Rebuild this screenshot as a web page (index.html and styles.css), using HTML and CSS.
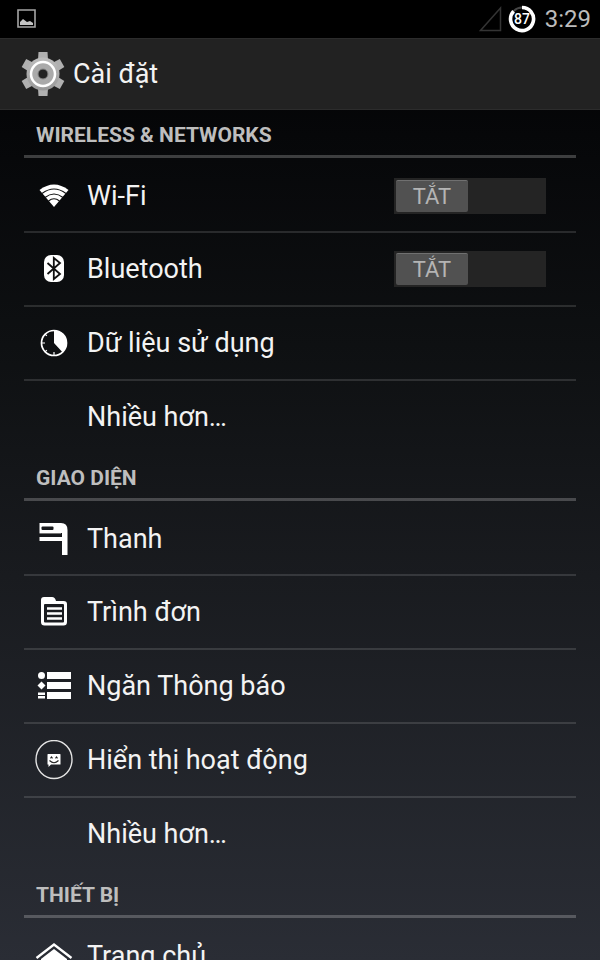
FILE: index.html
```html
<!DOCTYPE html>
<html lang="vi">
<head>
<meta charset="utf-8">
<meta name="viewport" content="width=device-width, initial-scale=1">
<title>Cài đặt</title>
<link rel="stylesheet" href="styles.css">
</head>
<body>
<div class="screen">
  <div class="status">
    <svg class="status-picture" width="20" height="20" viewBox="0 0 20 20"><path d="M1 1h17v17H1z" fill="none" stroke="#a5a5a5" stroke-width="1.600"/><path d="M3 16v-3l3-3 4 3 3-1 3 2v2z" fill="#c4c4c4"/></svg>
    <div class="status-right">
      <svg width="24" height="26" viewBox="0 0 24 26"><path d="M1.500 24.500H21.500V2z" fill="none" stroke="#343434" stroke-width="1.500"/></svg>
      <svg width="28" height="28" viewBox="0 0 28 28"><circle cx="14" cy="14" r="11.500" fill="none" stroke="#444" stroke-width="2"/><path d="M14 2.500A11.500 11.500 0 1 1 5.600 6.200" fill="none" stroke="#fff" stroke-width="3.600"/><text class="level" x="14" y="19" text-anchor="middle">87</text></svg>
      <time class="clock">3:29</time>
    </div>
  </div>
  <header class="bar">
    <svg width="44" height="46" viewBox="-22 -23 44 46">
      <defs><linearGradient id="metal" x1="0" y1="0" x2="0" y2="1"><stop offset="0" stop-color="#bdbdbd"/><stop offset="1" stop-color="#999"/></linearGradient></defs>
      <g fill="#b0b0b0">
        <path id="tooth" d="M-5-14L-4.500-22H4.500L5-14z"/>
        <use href="#tooth" transform="rotate(60)"/><use href="#tooth" transform="rotate(120)"/><use href="#tooth" transform="rotate(180)"/><use href="#tooth" transform="rotate(240)"/><use href="#tooth" transform="rotate(300)"/>
      </g>
      <circle r="16.500" fill="url(#metal)"/><circle r="12" fill="#aaa" stroke="#fff" stroke-width="2.500"/><circle r="5" fill="#222" stroke="#858585" stroke-width="1"/>
    </svg>
    <h1 class="title">Cài đặt</h1>
  </header>
  <main class="list">
    <section>
      <h2 class="heading">WIRELESS &amp; NETWORKS</h2>
      <ul class="rows">
        <li class="row">
          <svg class="icon" viewBox="0 0 40 40"><path d="M5.500 14Q20 3 34.500 14L20 31z" fill="#fff"/><g fill="none" stroke="#111" stroke-width="1.100"><path d="M8 17.500Q20 8.500 32 17.500M11 21.500Q20 14.500 29 21.500M14.500 25Q20 20.500 25.500 25"/></g></svg>
          <span class="label" id="wifi">Wi-Fi</span>
          <button class="switch" type="button" role="switch" aria-checked="false" aria-labelledby="wifi"><span class="thumb">TẮT</span></button>
        </li>
        <li class="row">
          <svg class="icon" viewBox="0 0 40 40"><rect x="10" y="6" width="20" height="27" rx="7" fill="#fff"/><path d="M13.500 14L26 25L19.800 30V9L26 14L13.500 25" fill="none" stroke="#111" stroke-width="1.800"/></svg>
          <span class="label" id="bluetooth">Bluetooth</span>
          <button class="switch" type="button" role="switch" aria-checked="false" aria-labelledby="bluetooth"><span class="thumb">TẮT</span></button>
        </li>
        <li class="row">
          <svg class="icon" viewBox="0 0 40 40"><circle cx="20" cy="20" r="12.500" fill="none" stroke="#fff" stroke-width="1.700"/><path d="M20 20V7.500A12.500 12.500 0 0 1 28.500 29.200z" fill="#fff"/><path d="M7 20h4M20 33v-4M10.800 10.800l2 2M10.800 29.200l2-2" stroke="#fff" stroke-width="1.200"/></svg>
          <a class="label" href="#">Dữ liệu sử dụng</a>
        </li>
        <li class="row"><span class="icon"></span><a class="label" href="#">Nhiều hơn…</a></li>
      </ul>
    </section>
    <section>
      <h2 class="heading">GIAO DIỆN</h2>
      <ul class="rows">
        <li class="row">
          <svg class="icon" viewBox="0 0 40 40"><path d="M5.500 4H27Q33.500 4 33.500 11V36H28V22H5.500V18H28V14H5.500z" fill="#fff"/><rect x="7.500" y="7.500" width="12" height="3.500" rx="1" fill="#17191c"/><path d="M5.500 14.500H27" stroke="#777" stroke-width="1"/></svg>
          <a class="label" href="#">Thanh</a>
        </li>
        <li class="row">
          <svg class="icon" viewBox="0 0 40 40"><path d="M7 8Q7 5 10 5H18Q21 5 22 9H29.500Q33 9 33 12V30Q33 33.500 29.500 33.500H10.500Q7 33.500 7 30z" fill="#fff"/><rect x="10" y="12" width="20" height="18.500" rx="1" fill="#1a1c20"/><path d="M13 16.500H28M13 21.500H28M13 26.500H28" stroke="#fff" stroke-width="2.400"/></svg>
          <a class="label" href="#">Trình đơn</a>
        </li>
        <li class="row">
          <svg class="icon" viewBox="0 0 40 40"><g fill="#fff"><path d="M13 6h24v7H13zM13 16h24v7H13zM13 26h24v7H13z"/><circle cx="7.500" cy="9.500" r="3.500"/><path d="M7.500 15.500l4 4-4 4-4-4zM4 26.500h7v2.500H4zM4 30h7v2.500H4z"/></g></svg>
          <a class="label" href="#">Ngăn Thông báo</a>
        </li>
        <li class="row">
          <svg class="icon" viewBox="0 0 40 40"><ellipse cx="20" cy="19.500" rx="18" ry="19" fill="none" stroke="#e4e4e4" stroke-width="1.400"/><path d="M14 14H26Q26.500 14 26.500 14.500V24.500H17L14.500 27V24.500H13.500V14.500Q13.500 14 14 14z" fill="#fff"/><path d="M16.500 18.300l1-1.300 1 1.300M21.500 18.300l1-1.300 1 1.300M15.500 20.500Q20 25 24.500 20.500" fill="none" stroke="#222" stroke-width="1.100"/></svg>
          <a class="label" href="#">Hiển thị hoạt động</a>
        </li>
        <li class="row"><span class="icon"></span><a class="label" href="#">Nhiều hơn…</a></li>
      </ul>
    </section>
    <section>
      <h2 class="heading">THIẾT BỊ</h2>
      <ul class="rows">
        <li class="row">
          <svg class="icon" viewBox="0 0 40 40"><path d="M2.500 22L20 8.500L37.500 22" fill="none" stroke="#fff" stroke-width="2.400"/><path d="M20 13L33 23V36H7V23z" fill="#fff"/></svg>
          <a class="label" href="#">Trang chủ</a>
        </li>
      </ul>
    </section>
  </main>
</div>
</body>
</html>
```
FILE: styles.css
```css
* { box-sizing: border-box; }

body {
  margin: 0;
  background: #000;
  color: #f3f3f3;
  font-family: Roboto, "Noto Sans", sans-serif;
}

h1, h2, ul { margin: 0; padding: 0; }

.screen {
  display: flex;
  flex-direction: column;
  height: 100vh;
  overflow: hidden;
  background: linear-gradient(#000 0%, #060709 14%, #0e1012 36%, #191b1f 60%, #2a2d35 100%);
}

.status {
  display: flex;
  flex: none;
  align-items: center;
  justify-content: space-between;
  height: 38px;
  padding: 0 9px 0 17px;
  background: #000;
}

.status-right {
  display: flex;
  align-items: center;
  gap: 5px;
}

.level {
  fill: #fff;
  font-size: 14px;
  font-weight: 500;
}

.clock {
  margin-left: 4px;
  color: #bcbcbc;
  font-size: 24px;
  line-height: 32px;
}

.bar {
  display: flex;
  flex: none;
  align-items: center;
  gap: 8px;
  height: 72px;
  padding-left: 21px;
  border-top: 1px solid #2c2c2c;
  border-bottom: 1px solid #2c2c2c;
  background: #222;
}

.title {
  font-size: 27px;
  font-weight: 400;
  line-height: 36px;
}

.list {
  flex: 1;
  min-height: 0;
  padding: 0 24px;
  overflow: hidden;
}

.heading {
  height: 48px;
  padding: 11px 12px 0;
  border-bottom: 3px solid rgba(255, 255, 255, 0.22);
  color: #bebebe;
  font-size: 21px;
  font-weight: 700;
  line-height: 28px;
}

.rows { list-style: none; }

.row {
  display: flex;
  align-items: center;
  gap: 13px;
  height: 73px;
  padding: 2px 30px 0 10px;
}

.row + .row {
  height: 74px;
  padding-top: 0;
  border-top: 2px solid rgba(255, 255, 255, 0.13);
}

.icon {
  flex: none;
  width: 40px;
  height: 40px;
}

.label {
  flex: 1;
  color: inherit;
  font-size: 27px;
  line-height: 36px;
  text-decoration: none;
}

.switch {
  width: 152px;
  height: 36px;
  padding: 2px;
  border: 0;
  background: #242424;
  font: inherit;
}

.thumb {
  display: block;
  width: 72px;
  height: 32px;
  border-top: 1px solid #707070;
  border-radius: 2px;
  background: #515151;
  color: #b4b4b4;
  font-size: 22px;
  line-height: 32px;
  text-align: center;
}
```
